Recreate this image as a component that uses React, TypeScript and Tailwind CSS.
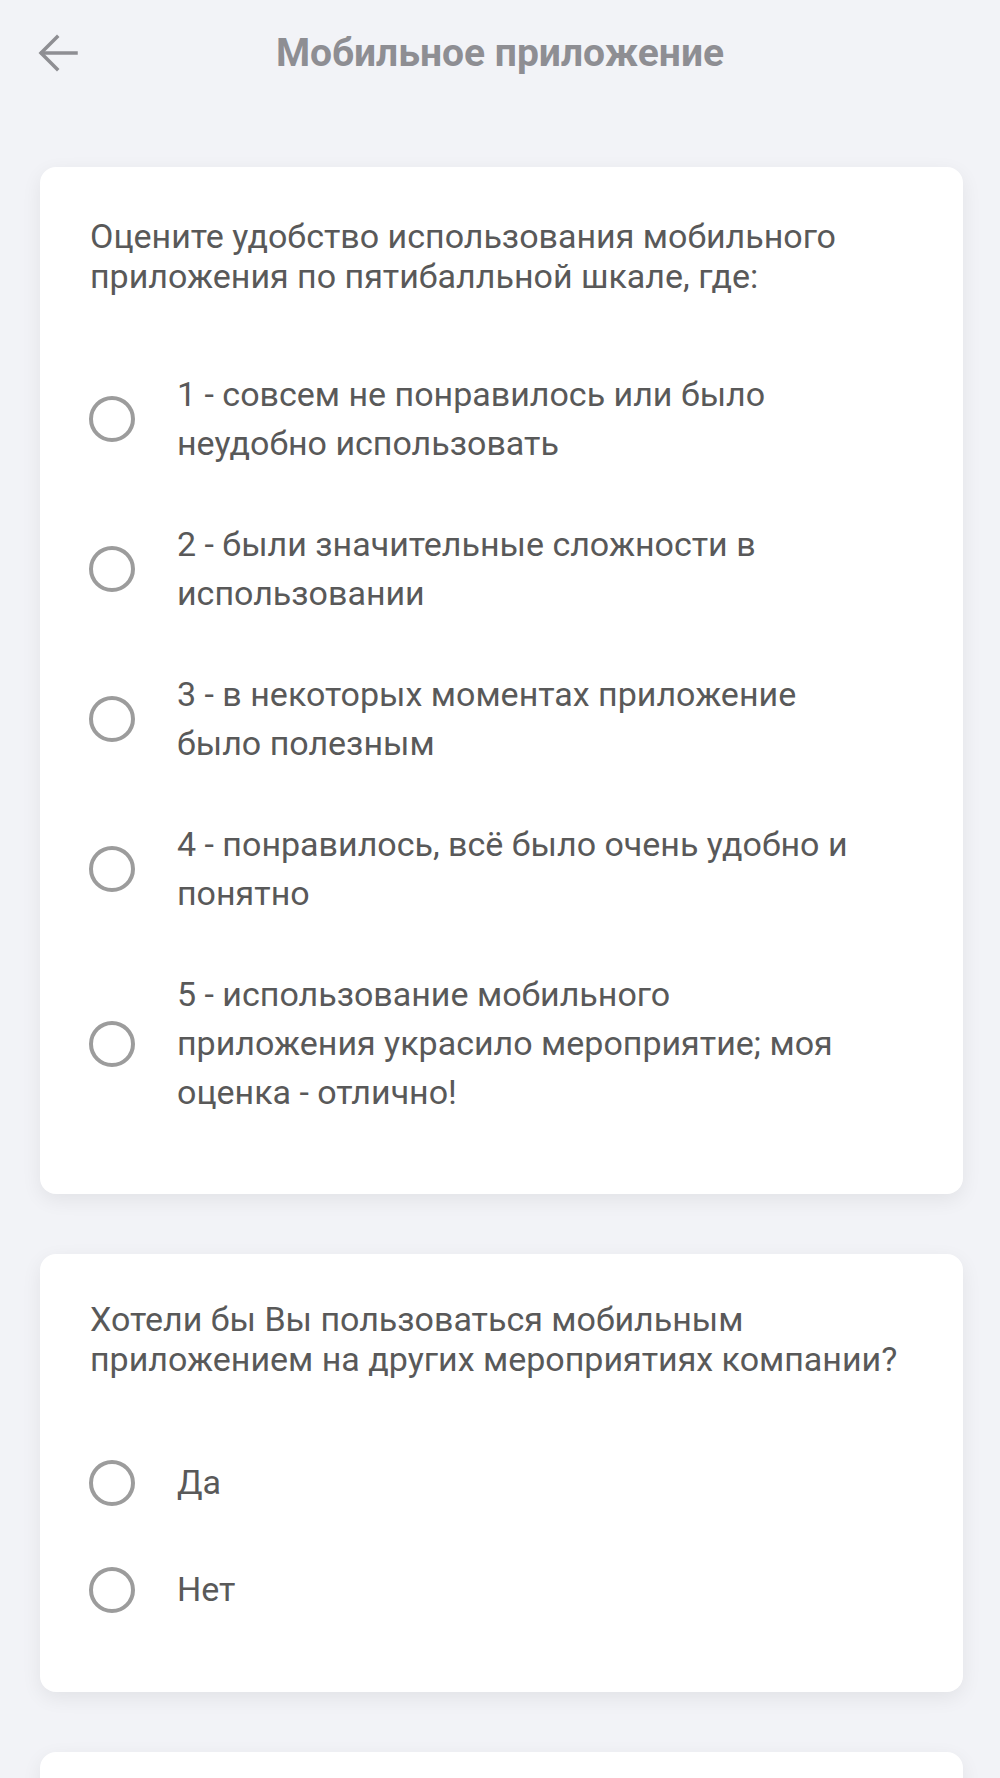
const ratingOptions = [
  "1 - совсем не понравилось или было неудобно использовать",
  "2 - были значительные сложности в использовании",
  "3 - в некоторых моментах приложение было полезным",
  "4 - понравилось, всё было очень удобно и понятно",
  "5 - использование мобильного приложения украсило мероприятие; моя оценка - отлично!",
];

function Radio() {
  return <span className="w-[46px] h-[46px] shrink-0 rounded-full border-[4px] border-[#9c9c9c] bg-white" />;
}

function Option({ label }: { label: string }) {
  return (
    <label className="flex items-center gap-[42px] pl-[49px] pr-[104px]">
      <Radio />
      <span className="text-[34px] leading-[49px] text-[#595959]">{label}</span>
    </label>
  );
}

export default function App() {
  return (
    <div className="min-h-[1778px] bg-[#f2f3f7] font-['Roboto','Noto_Sans',sans-serif] overflow-hidden">
      <header className="h-[106px] grid grid-cols-[1fr_auto_1fr] items-center px-[38px]">
        <svg width="40" height="38" viewBox="0 0 40 38" fill="none" stroke="#8e8e93" strokeWidth="3.5" strokeLinecap="square">
          <path d="M38 19H4" />
          <path d="M19 3L3 19l16 16" />
        </svg>
        <h1 className="text-[39px] font-bold text-[#8e8e93]">Мобильное приложение</h1>
        <div />
      </header>

      <div className="flex flex-col gap-[60px] mt-[61px] ml-[40px] mr-[37px]">
        <section className="bg-white rounded-[16px] shadow-[0_6px_20px_rgba(0,0,0,0.07)] pt-[49px] pb-[77px]">
          <p className="px-[50px] text-[34px] leading-[40px] text-[#595959]">
            Оцените удобство использования мобильного приложения по пятибалльной шкале, где:
          </p>
          <div className="mt-[74px] flex flex-col gap-[52px]">
            {ratingOptions.map((o) => (
              <Option key={o} label={o} />
            ))}
          </div>
        </section>

        <section className="bg-white rounded-[16px] shadow-[0_6px_20px_rgba(0,0,0,0.07)] pt-[45px] pb-[78px]">
          <p className="px-[50px] text-[34px] leading-[40px] text-[#595959]">
            Хотели бы Вы пользоваться мобильным приложением на других мероприятиях компании?
          </p>
          <div className="mt-[79px] flex flex-col gap-[58px]">
            <Option label="Да" />
            <Option label="Нет" />
          </div>
        </section>

        <section className="bg-white rounded-[16px] shadow-[0_6px_20px_rgba(0,0,0,0.07)] h-[200px]" />
      </div>
    </div>
  );
}
